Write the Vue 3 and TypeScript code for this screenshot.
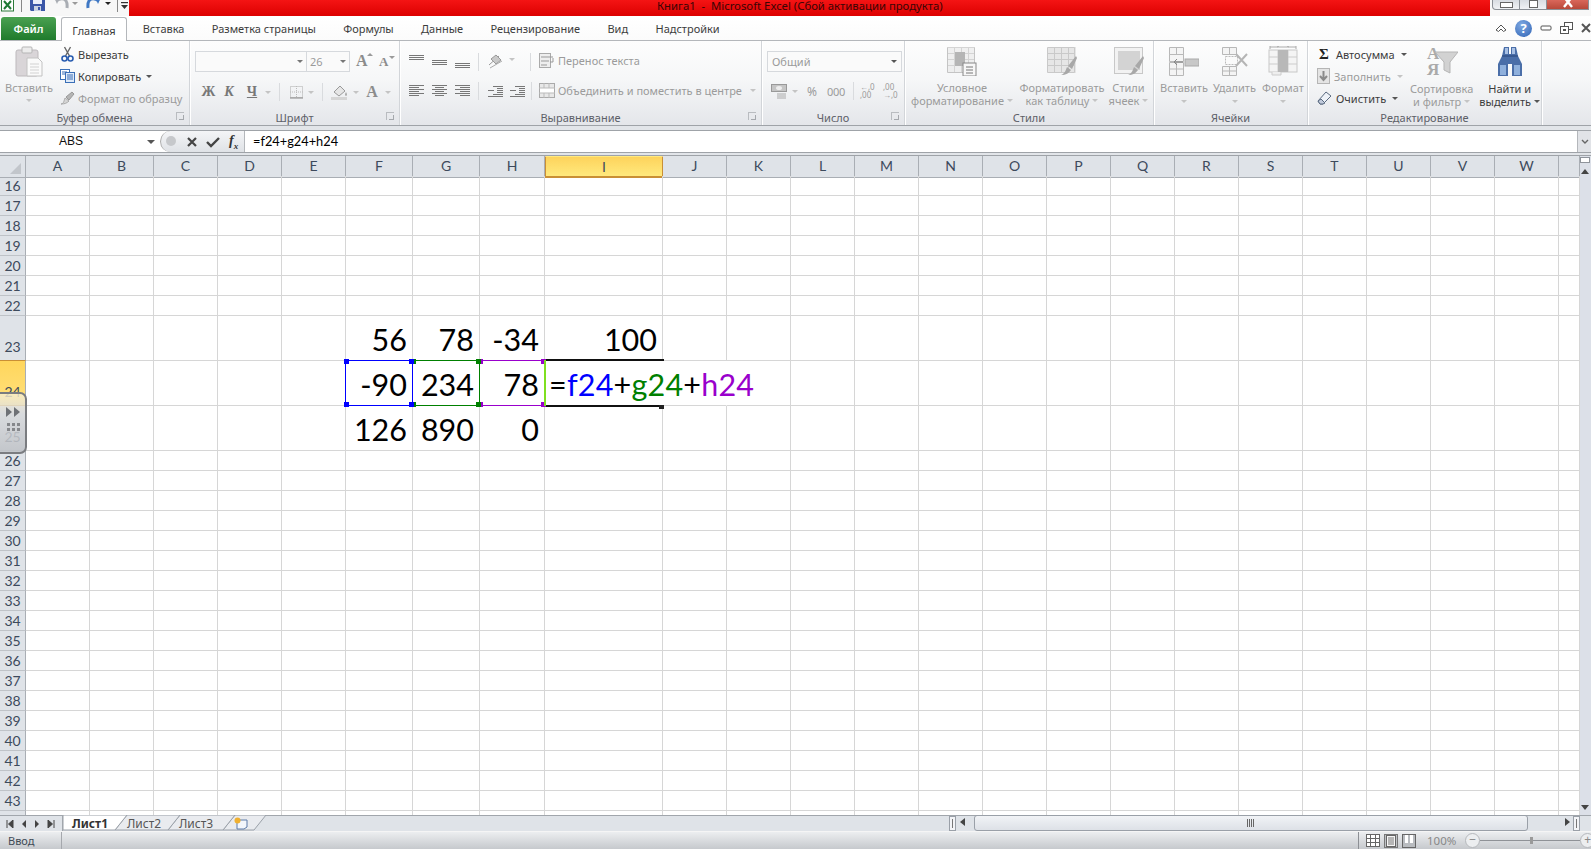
<template>
  <div class="app">
    <header class="titlebar">
      <div class="qat">
        <svg class="q-xl" width="13" height="12" viewBox="0 0 13 12"><rect x="0.5" y="-3" width="12" height="14" fill="#fff" stroke="#2c7a3a" /><path d="M3 1 L10 9 M10 1 L3 9" stroke="#1f7a35" stroke-width="2" /></svg>
        <span class="q-sep"></span>
        <svg class="q-save" width="15" height="12" viewBox="0 0 15 12"><path d="M0 -3H15V11H1L0 10Z" fill="#3b57a8" /><rect x="3" y="-3" width="9" height="7" fill="#e9eefa" /><rect x="4" y="6" width="7" height="5" fill="#c9d2e2" /><rect x="8" y="7" width="2" height="3" fill="#3b57a8" /></svg>
        <svg class="q-undo" width="16" height="12" viewBox="0 0 16 12"><path d="M2 1 C8 -3 14 -2 13 8" fill="none" stroke="#a9adb3" stroke-width="3" /><path d="M0 -3 L6 -3 L3 4Z" fill="#a9adb3" /></svg>
        <i class="caret c-q1"></i>
        <svg class="q-redo" width="16" height="12" viewBox="0 0 16 12"><path d="M14 1 C8 -3 2 -2 3 8" fill="none" stroke="#3f78c4" stroke-width="3" /><path d="M16 -3 L10 -3 L13 4Z" fill="#3f78c4" /></svg>
        <i class="caret c-q2"></i>
        <span class="q-sep s2"></span>
        <svg class="q-more" width="9" height="8" viewBox="0 0 9 8"><path d="M1 0.5H8" stroke="#333" stroke-width="1.4" /><path d="M1 3L8 3L4.5 7Z" fill="#333" /></svg>
      </div>
      <div class="redbar"><span class="doc">{{ docTitle }}</span></div>
      <div class="winbtns">
        <div class="wb min"><i></i></div>
        <div class="wb rest"><i></i></div>
        <div class="wb close"><svg width="14" height="8" viewBox="0 0 14 8"><path d="M3 -3 L7 2 L11 -3 M7 2 L3 7 M7 2 L11 7" fill="none" stroke="#fff" stroke-width="2.4" /></svg></div>
      </div>
    </header>

    <nav class="tabstrip">
      <div class="file">Файл</div>
      <div class="home">Главная</div>
      <div v-for="t in ribbonTabs" :key="t" class="rtab">{{ t }}</div>
      <div class="wincontrols">
        <svg width="12" height="10" viewBox="0 0 12 10"><path d="M1 7 L6 2 L11 7 L8.5 8.5 L6 6 L3.5 8.5Z" fill="#fff" stroke="#555" /></svg>
        <span class="help">?</span>
        <svg width="12" height="8" viewBox="0 0 12 8"><rect x="1" y="2" width="10" height="4" rx="1" fill="#fff" stroke="#555" /></svg>
        <svg width="13" height="12" viewBox="0 0 13 12"><rect x="4.5" y="0.5" width="8" height="7" fill="#fff" stroke="#555" /><rect x="0.5" y="4.5" width="8" height="7" fill="#fff" stroke="#555" /><rect x="3" y="7" width="3" height="2" fill="#555" /></svg>
        <svg width="10" height="10" viewBox="0 0 10 10"><path d="M1 1 L9 9 M9 1 L1 9" stroke="#555" stroke-width="2" /></svg>
      </div>
    </nav>

    <section class="ribbon">
      <div class="group g-clip">
        <div class="body">
          <div class="bigbtn paste">
            <svg width="28" height="31" viewBox="0 0 28 31">
              <rect x="1" y="4" width="22" height="26" rx="2" fill="#d9d5d8" stroke="#bdb9bc" />
              <rect x="7" y="1" width="10" height="6" rx="1" fill="#ececec" stroke="#b5b5b5" />
              <path d="M12 12H23L27 16V30H12Z" fill="#fafafa" stroke="#c2c2c2" />
              <path d="M15 18H24M15 21H24M15 24H24M15 27H24" stroke="#d2d2d2" />
            </svg>
            <span class="lab dim">Вставить</span>
            <i class="caret soft"></i>
          </div>
          <div class="smallcol">
            <div class="srow">
              <svg class="sic" width="14" height="16" viewBox="0 0 14 16"><path d="M4 1 L9 10 M10 1 L5 10" stroke="#666" stroke-width="1.4" /><circle cx="4" cy="12.5" r="2.5" fill="none" stroke="#2a5db0" stroke-width="1.6" /><circle cx="10" cy="12.5" r="2.5" fill="none" stroke="#2a5db0" stroke-width="1.6" /></svg>
              <span class="lab">Вырезать</span>
            </div>
            <div class="srow">
              <svg class="sic" width="15" height="14" viewBox="0 0 15 14"><rect x="0.5" y="0.5" width="9" height="10" fill="#fff" stroke="#3a6fb7" /><rect x="5.5" y="3.5" width="9" height="10" fill="#dfeaf8" stroke="#3a6fb7" /><path d="M2 3H7M2 5H5M7 6H13M7 8H13M7 10H13" stroke="#3a6fb7" /></svg>
              <span class="lab">Копировать</span><i class="caret dark"></i>
            </div>
            <div class="srow">
              <svg class="sic" width="15" height="14" viewBox="0 0 15 14"><path d="M1 13 C4 13 4 9 5 7 L9 10 C7 12 5 13 1 13Z" fill="#d5d5d5" stroke="#aaa" /><path d="M6 6 L12 1 L14 3 L9 9Z" fill="#b5b5b5" stroke="#999" /></svg>
              <span class="lab dim">Формат по образцу</span>
            </div>
          </div>
        </div>
        <div class="gname">Буфер обмена<i class="launch"></i></div>
      </div>

      <div class="group g-font">
        <div class="body col">
          <div class="combos">
            <div class="combo fontname"><i class="caret mid"></i></div>
            <div class="combo fontsize"><span class="dim">26</span><i class="caret mid"></i></div>
            <span class="growfont a1">A<i class="caret up"></i></span>
            <span class="growfont a2">A<i class="caret"></i></span>
          </div>
          <div class="toolrow fontrow">
            <b class="bi w19">Ж</b>
            <b class="bi w22 it">К</b>
            <b class="bi w24 un">Ч</b>
            <i class="caret soft w9"></i>
            <span class="vsep m1"></span>
            <svg class="m2" width="15" height="14" viewBox="0 0 15 14"><rect x="1.5" y="1.5" width="12" height="11" fill="none" stroke="#aaa" stroke-dasharray="1 1" /><path d="M7.5 1V13M1 7H14" stroke="#bbb" stroke-dasharray="1 1" /><path d="M1 13H14" stroke="#888" /></svg>
            <i class="caret soft m3"></i>
            <span class="vsep m4"></span>
            <svg class="m5" width="18" height="16" viewBox="0 0 18 16"><path d="M3 8 L9 2 L14 7 L8 12Z" fill="#e6e6e6" stroke="#999" /><path d="M15 8 q2 3 0 4 q-2 -1 0 -4Z" fill="#aaa" /><rect x="0" y="13" width="16" height="3" fill="#d5d5d5" /></svg>
            <i class="caret soft m6"></i>
            <b class="bi fontA">A</b>
            <i class="caret soft m7"></i>
          </div>
        </div>
        <div class="gname">Шрифт<i class="launch"></i></div>
      </div>

      <div class="group g-align">
        <div class="body col">
          <div class="toolrow alrow1">
            <svg v-for="(a, i) in alignTop" :key="i" class="alicon" width="15" height="16" viewBox="0 0 15 16"><path :d="a" stroke="#777" fill="none" /></svg>
            <span class="vsep a-sep1"></span>
            <svg class="orient" width="20" height="16" viewBox="0 0 20 16"><path d="M1 12 L11 3" stroke="#999" /><path d="M3 6 L8 2 L13 7 L8 11Z" fill="#c9c9c9" stroke="#999" /><path d="M2 15 L14 8" stroke="#aaa" /></svg>
            <i class="caret soft a-c"></i>
            <span class="vsep a-sep2"></span>
            <svg class="wrap" width="16" height="15" viewBox="0 0 16 15"><rect x="0.5" y="0.5" width="11" height="14" fill="#eee" stroke="#aaa" /><path d="M2 4H14 M2 8H10 M2 12H8" stroke="#999" /><path d="M14 5V9H11" fill="none" stroke="#999" /></svg>
            <span class="lab dim wraplab">Перенос текста</span>
          </div>
          <div class="toolrow alrow2">
            <svg v-for="(a, i) in alignBottom" :key="i" class="alicon" width="15" height="14" viewBox="0 0 15 14"><path :d="a" stroke="#777" fill="none" /></svg>
            <span class="vsep a-sep1"></span>
            <svg v-for="(a, i) in indents" :key="'n' + i" class="indent" width="15" height="12" viewBox="0 0 15 12"><path :d="a" stroke="#777" fill="none" /></svg>
            <span class="vsep a-sep3"></span>
            <svg class="merge" width="16" height="15" viewBox="0 0 16 15"><rect x="0.5" y="0.5" width="15" height="14" fill="#e8e8e8" stroke="#aaa" /><rect x="1" y="5" width="14" height="5" fill="#fff" /><path d="M0 5H16M0 10H16M5 0V5M10 0V5M5 10V15M10 10V15" stroke="#bbb" /></svg>
            <span class="lab dim wraplab">Объединить и поместить в центре</span>
            <i class="caret soft a-c2"></i>
          </div>
        </div>
        <div class="gname">Выравнивание<i class="launch"></i></div>
      </div>

      <div class="group g-num">
        <div class="body col">
          <div class="combos numcombo"><div class="combo general"><span class="dim">Общий</span><i class="caret dark"></i></div></div>
          <div class="toolrow numrow">
            <svg width="16" height="15" viewBox="0 0 16 15"><rect x="0.5" y="0.5" width="15" height="7" fill="#c5c5c5" stroke="#999" /><ellipse cx="8" cy="4" rx="3" ry="2" fill="#eee" /><path d="M6 10H15M6 12H15M6 14H15" stroke="#aaa" /></svg>
            <i class="caret soft n1"></i>
            <span class="dim n2">%</span>
            <span class="dim n3">000</span>
            <span class="vsep n4"></span>
            <span class="dec n5"><em>←,0</em><em>,00</em></span>
            <span class="dec n6"><em>,00</em><em>→,0</em></span>
          </div>
        </div>
        <div class="gname">Число<i class="launch"></i></div>
      </div>

      <div class="group g-styles">
        <div class="body bigs">
          <div class="bigbtn st1">
            <svg width="30" height="30" viewBox="0 0 30 30">
              <path v-for="(d, i) in tableLines" :key="i" :d="d" stroke="#c4c4c4" fill="none" />
              <rect x="1" y="1" width="26" height="25" fill="#e3e3e3" opacity=".5" />
              <rect x="8" y="6" width="10" height="14" fill="#b5b5b5" />
              <rect x="16" y="17" width="13" height="13" fill="#f7f7f7" stroke="#888" />
              <path d="M19 21H26M19 24H26M19 27H26" stroke="#777" />
            </svg>
            <span class="lab dim tight">Условное</span>
            <span class="lab dim tight">форматирование<i class="caret soft"></i></span>
          </div>
          <div class="bigbtn st2">
            <svg width="30" height="30" viewBox="0 0 30 30">
              <rect x="1" y="1" width="28" height="26" fill="#e6e6e6" />
              <path v-for="(d, i) in tableLines" :key="i" :d="d" stroke="#c9c9c9" fill="none" />
              <path d="M14 29 C18 28 19 23 20 21 L24 24 C22 27 19 29 14 29Z M21 20 L29 10 L30 12 L25 23Z" fill="#a8a8a8" />
            </svg>
            <span class="lab dim tight">Форматировать</span>
            <span class="lab dim tight">как таблицу<i class="caret soft"></i></span>
          </div>
          <div class="bigbtn st3">
            <svg width="30" height="30" viewBox="0 0 30 30">
              <rect x="0.5" y="1.5" width="28" height="26" fill="#f2f2f2" stroke="#c8c8c8" />
              <rect x="4" y="5" width="22" height="19" fill="#d3d3d3" />
              <path d="M14 29 C18 28 19 23 20 21 L24 24 C22 27 19 29 14 29Z M21 20 L29 10 L30 12 L25 23Z" fill="#a8a8a8" />
            </svg>
            <span class="lab dim tight">Стили</span>
            <span class="lab dim tight">ячеек<i class="caret soft"></i></span>
          </div>
        </div>
        <div class="gname">Стили</div>
      </div>

      <div class="group g-cells">
        <div class="body bigs">
          <div class="bigbtn ce1">
            <svg width="30" height="30" viewBox="0 0 30 30">
              <path d="M0.5 1.5H14.5V8.5H0.5ZM0.5 8.5H14.5V15.5H0.5Z M0.5 16.5H14.5V29.5H0.5Z M7.5 1.5V8.5M7.5 16.5V29.5M0.5 23H14.5" fill="#f4f4f4" stroke="#b8b8b8" />
              <rect x="16" y="13" width="14" height="7" fill="#c8c8c8" stroke="#aaa" />
              <path d="M14 16H5M8 13L5 16L8 19" fill="none" stroke="#888" />
            </svg>
            <span class="lab dim tight">Вставить</span><i class="caret soft cc"></i>
          </div>
          <div class="bigbtn ce2">
            <svg width="26" height="30" viewBox="0 0 26 30">
              <path d="M0.5 1.5H14.5V8.5H0.5Z M0.5 20.5H14.5V29.5H0.5Z M7.5 1.5V8.5M7.5 20.5V29.5M0.5 25H14.5" fill="#f4f4f4" stroke="#b8b8b8" />
              <rect x="3.5" y="10.5" width="12" height="8" fill="#fafafa" stroke="#bbb" stroke-dasharray="2 1" />
              <path d="M14 8 L25 20 M25 8 L14 20" stroke="#b5b5b5" stroke-width="2" />
            </svg>
            <span class="lab dim tight">Удалить</span><i class="caret soft cc"></i>
          </div>
          <div class="bigbtn ce3">
            <svg width="32" height="30" viewBox="0 0 32 30">
              <path d="M3 1H29 M3 0V3M29 0V3M10 1 l2 -1 M22 1 l-2 -1" stroke="#aaa" fill="none" />
              <rect x="2" y="4" width="28" height="22" fill="#f4f4f4" stroke="#c8c8c8" />
              <path d="M2 11H30M2 18H30M11 4V26M21 4V26" stroke="#ccc" />
              <rect x="11" y="4" width="10" height="22" fill="#b8b8b8" />
              <path d="M5 26V29H14V26" fill="#eee" stroke="#ccc" />
            </svg>
            <span class="lab dim tight">Формат</span><i class="caret soft cc"></i>
          </div>
        </div>
        <div class="gname">Ячейки</div>
      </div>

      <div class="group g-edit">
        <div class="body">
          <div class="smallcol ed">
            <div class="srow"><b class="sigma">Σ</b><span class="lab">Автосумма</span><i class="caret dark"></i></div>
            <div class="srow">
              <svg class="sic2" width="13" height="16" viewBox="0 0 13 16"><rect x="0.5" y="0.5" width="12" height="15" fill="#e4e4e4" stroke="#b5b5b5" /><path d="M6.5 3V11M3 8L6.5 12L10 8" fill="none" stroke="#8a8a8a" stroke-width="2" /></svg>
              <span class="lab dim">Заполнить</span><i class="caret soft"></i>
            </div>
            <div class="srow">
              <svg class="sic2" width="15" height="14" viewBox="0 0 15 14"><path d="M1 10 L9 1 L14 5 L6 13 H3Z" fill="#eef2f8" stroke="#5a6a80" /><path d="M1 10 L4 8 L8 12 L6 13 H3Z" fill="#c2cbdc" stroke="#5a6a80" /></svg>
              <span class="lab">Очистить</span><i class="caret dark"></i>
            </div>
          </div>
          <div class="bigbtn sort">
            <svg width="32" height="31" viewBox="0 0 32 31">
              <text x="1" y="13" class="az">A</text>
              <text x="1" y="29" class="az">Я</text>
              <path d="M9 6H32L24 16V27L18 24V16Z" fill="#d2d2d2" stroke="#b5b5b5" />
            </svg>
            <span class="lab dim tight">Сортировка</span>
            <span class="lab dim tight">и фильтр<i class="caret soft"></i></span>
          </div>
          <div class="bigbtn find">
            <svg width="28" height="31" viewBox="0 0 28 31">
              <path d="M8 1H13V8H15V1H20L22 10L26 18V30H16V18H12V30H2V18L6 10Z" fill="#4a6ea8" />
              <rect x="4" y="19" width="6" height="10" fill="#8fb0dc" />
              <rect x="18" y="19" width="6" height="10" fill="#8fb0dc" />
              <rect x="9" y="2" width="3" height="6" fill="#a8c0e4" />
              <rect x="16" y="2" width="3" height="6" fill="#a8c0e4" />
              <path d="M6 10H22" stroke="#29457a" />
            </svg>
            <span class="lab tight">Найти и</span>
            <span class="lab tight">выделить<i class="caret dark"></i></span>
          </div>
        </div>
        <div class="gname">Редактирование</div>
      </div>
      <div class="ribbon-rest"></div>
    </section>

    <section class="formula">
      <div class="fbar">
        <div class="namebox">ABS<i class="caret dark nb"></i></div>
        <div class="fxbtns">
          <span class="knob"></span>
          <svg width="12" height="12" viewBox="0 0 12 12"><path d="M2 2 L10 10 M10 2 L2 10" stroke="#444" stroke-width="2.2" /></svg>
          <svg width="14" height="12" viewBox="0 0 14 12"><path d="M1 6 L5 10 L13 2" fill="none" stroke="#444" stroke-width="2.4" /></svg>
          <span class="fx">f<sub>x</sub></span>
        </div>
        <div class="finput">=f24+g24+h24</div>
        <div class="fexpand"><svg width="8" height="6" viewBox="0 0 8 6"><path d="M1 1 L4 4 L7 1" fill="none" stroke="#666" stroke-width="1.4" /></svg></div>
      </div>
    </section>

    <section class="sheet">
      <div class="grid">
        <div class="row headrow">
          <div class="corner"><i></i></div>
          <div v-for="c in cols" :key="c" class="colhead" :class="{ on: c === 'I' }">{{ c }}</div>
          <div class="colhead"></div>
        </div>
        <div v-for="r in rows" :key="r" class="row" :class="{ tall: r >= 23 && r <= 25 }">
          <div class="rowhead" :class="{ on: r === 24 }"><span v-if="r < 44">{{ r }}</span></div>
          <div v-for="c in allCols" :key="c" class="cell" :class="cellClass(c, r)">
            <span v-if="valueAt(c, r)" class="val">{{ valueAt(c, r) }}</span>
            <span v-if="c === 'I' && r === 24" class="editing">=<span class="blue">f24</span>+<span class="green">g24</span>+<span class="purple">h24</span></span>
            <span v-if="refOf(c, r)" class="ref" :class="refOf(c, r)">
              <i class="h tl"></i><i class="h tr"></i><i class="h bl"></i><i class="h br"></i>
            </span>
            <span v-if="c === 'I' && r === 24" class="fill"></span>
          </div>
        </div>
      </div>
      <aside class="vscroll">
        <span class="vsplit"></span>
        <i class="arr up"></i>
        <i class="arr down"></i>
      </aside>
    </section>

    <section class="tabsbar">
      <div class="nav">
        <svg width="8" height="8" viewBox="0 0 8 8"><path d="M1 0V8M7 0V8L2.5 4Z" stroke="#444" fill="#444" /></svg>
        <svg width="6" height="8" viewBox="0 0 6 8"><path d="M5 0V8L1 4Z" fill="#444" /></svg>
        <svg width="6" height="8" viewBox="0 0 6 8"><path d="M1 0V8L5 4Z" fill="#444" /></svg>
        <svg width="8" height="8" viewBox="0 0 8 8"><path d="M7 0V8M1 0V8L5.5 4Z" stroke="#444" fill="#444" /></svg>
      </div>
      <div class="sheets">
        <svg class="shapes" width="210" height="16" viewBox="0 0 210 16">
          <path d="M160 15 L172 0 H203 L191 15Z" fill="#e9ebef" stroke="#9aa0a8" />
          <path d="M105 15 L117 0 H172 L160 15Z" fill="#e9ebef" stroke="#9aa0a8" />
          <path d="M52 15 L64 0 H117 L105 15Z" fill="#e9ebef" stroke="#9aa0a8" />
          <path d="M0 0 H64 L52 15 H0Z" fill="#fff" stroke="#9aa0a8" />
        </svg>
        <span class="sheet-name active">Лист1</span>
        <span class="sheet-name second">Лист2</span>
        <span class="sheet-name">Лист3</span>
        <svg class="newsheet" width="14" height="13" viewBox="0 0 14 13"><path d="M3 3H13V10L10 12H3Z" fill="#f3f6fb" stroke="#5c7ba8" /><circle cx="3.5" cy="3.5" r="3" fill="#f0b030" /></svg>
      </div>
      <div class="hspacer"></div>
      <span class="split"><i></i></span>
      <span class="harrow"><i class="arr left"></i></span>
      <div class="thumb"><span class="grip"></span></div>
      <span class="harrow wide"><i class="arr right"></i></span>
      <span class="split"><i></i></span>
      <span class="hcorner"></span>
    </section>

    <footer class="status">
      <span class="mode">Ввод</span>
      <div class="views">
        <svg width="14" height="13" viewBox="0 0 14 13"><rect x="0.5" y="0.5" width="13" height="12" fill="#fff" stroke="#666" /><path d="M0 4.5H14M0 8.5H14M4.5 0V13M9.5 0V13" stroke="#666" /></svg>
        <span class="viewbtn"><svg width="10" height="12" viewBox="0 0 10 12"><rect x="0.5" y="0.5" width="9" height="11" fill="#f5f5f5" stroke="#666" /><path d="M2 3H8M2 5H8M2 7H8M2 9H8" stroke="#777" /></svg></span>
        <svg width="14" height="14" viewBox="0 0 14 14"><rect x="0.5" y="0.5" width="13" height="13" fill="#b9bcc0" stroke="#666" /><rect x="3" y="1" width="3" height="8" fill="#fff" /><rect x="8" y="1" width="3" height="8" fill="#fff" /></svg>
      </div>
      <span class="pct">100%</span>
      <span class="zbtn">−</span>
      <span class="slider"><i></i></span>
      <span class="zbtn plus">+</span>
    </footer>

    <div class="floatbar">
      <div class="ff"><i></i><i></i></div>
      <div class="dots"><i v-for="n in 6" :key="n"></i></div>
    </div>
  </div>
</template>

<script setup lang="ts">
const docTitle = 'Книга1\u00a0\u00a0-\u00a0\u00a0Microsoft Excel (Сбой активации продукта)';
const ribbonTabs = ['Вставка', 'Разметка страницы', 'Формулы', 'Данные', 'Рецензирование', 'Вид', 'Надстройки'];

const cols = 'ABCDEFGHIJKLMNOPQRSTUVW'.split('');
const allCols = [...cols, 'X'];
const rows: number[] = [];
for (let r = 16; r <= 44; r++) rows.push(r);

const values: Record<string, string> = {
  F23: '56', G23: '78', H23: '-34', I23: '100',
  F24: '-90', G24: '234', H24: '78',
  F25: '126', G25: '890', H25: '0',
};

function valueAt(col: string, row: number): string {
  return values[col + row] || '';
}

function refOf(col: string, row: number): string {
  if (row !== 24) return '';
  if (col === 'F') return 'r-blue';
  if (col === 'G') return 'r-green';
  if (col === 'H') return 'r-purple';
  return '';
}

function cellClass(col: string, row: number) {
  return {
    active: col === 'I' && row === 24,
    open: (col === 'J' && row === 24),
    num: !!valueAt(col, row),
  };
}

// horizontal text lines for the alignment buttons
function lines(spec: number[][]): string {
  return spec.map(([x1, x2, y]) => `M${x1} ${y}.5H${x2}`).join('');
}
const full = (ys: number[]) => ys.map((y) => [0, 15, y]);
const alignTop = [
  lines(full([2, 4, 6])),
  lines(full([7, 9, 11])),
  lines(full([10, 12, 14])),
];
const alignBottom = [
  lines([[0, 15, 1], [0, 10, 3], [0, 15, 5], [0, 10, 7], [0, 15, 9], [0, 10, 11]]),
  lines([[0, 15, 1], [3, 12, 3], [0, 15, 5], [3, 12, 7], [0, 15, 9], [3, 12, 11]]),
  lines([[0, 15, 1], [5, 15, 3], [0, 15, 5], [5, 15, 7], [0, 15, 9], [5, 15, 11]]),
];
const indents = [
  lines([[5, 15, 1], [9, 15, 3], [0, 6, 5], [9, 15, 5], [9, 15, 7], [5, 15, 9], [0, 15, 11]]),
  lines([[5, 15, 1], [9, 15, 3], [0, 6, 5], [9, 15, 5], [9, 15, 7], [5, 15, 9], [0, 15, 11]]),
];
const tableLines = ['M0.5 1.5H27.5V26.5H0.5ZM0.5 7.5H27.5M0.5 13.5H27.5M0.5 19.5H27.5M7.5 1V27M14.5 1V27M21.5 1V27'];
</script>

<style>
html, body { margin: 0; padding: 0; background: #fff; overflow: hidden; }
</style>

<style scoped>
.app {
  width: 1591px;
  height: 849px;
  display: flex;
  flex-direction: column;
  position: relative;
  overflow: hidden;
  font-family: "Noto Sans", sans-serif;
  font-size: 11px;
  color: #3c3c3c;
  background: #fff;
}
svg { flex: none; display: block; overflow: hidden; }
i { display: block; font-style: normal; }

/* title bar */
.titlebar { height: 16px; display: flex; background: #f7f7f7; flex: none; }
.qat { width: 129px; display: flex; align-items: flex-start; flex: none; overflow: hidden; }
.q-xl { margin-left: 1px; }
.q-sep { width: 1px; height: 12px; background: #888; margin-left: 7px; }
.q-save { margin-left: 8px; }
.q-undo { margin-left: 9px; }
.c-q1 { margin: 2px 0 0 2px; }
.q-redo { margin-left: 7px; }
.c-q2 { margin: 2px 0 0 4px; border-top-color: #222 !important; }
.s2 { margin-left: 6px; }
.q-more { margin: 2px 0 0 2px; }
.redbar {
  flex: 1;
  background: linear-gradient(#f41414, #dc0000);
  padding-left: 528px;
  overflow: hidden;
}
.doc { font-size: 11.3px; line-height: 11px; display: block; color: #3a0505; white-space: nowrap; }
.winbtns { width: 99px; display: flex; height: 11px; flex: none; padding-left: 2px; }
.wb { height: 10px; border: 1px solid #8a8f96; border-top: 0; box-sizing: border-box; display: flex; justify-content: center; overflow: hidden; background: linear-gradient(#d8dce2, #f0f2f5); }
.min { width: 28px; border-bottom-left-radius: 4px; }
.min i { width: 11px; height: 4px; margin-top: 2px; background: #fff; border: 1px solid #666; }
.rest { width: 27px; border-left: 0; }
.rest i { width: 7px; height: 6px; margin-top: 0; background: #fff; border: 1px solid #666; }
.close { width: 42px; border-left: 0; background: linear-gradient(#d9675a, #b9493a); }

/* ribbon tabs */
.tabstrip {
  height: 25px;
  flex: none;
  display: flex;
  align-items: flex-end;
  background: linear-gradient(#fff, #fbfbfb);
  border-bottom: 1px solid #b4b7bb;
  box-sizing: border-box;
  position: relative;
}
.file {
  width: 55px;
  height: 23px;
  margin-left: 1px;
  line-height: 23px;
  text-align: center;
  color: #fff;
  font-weight: 600;
  border-radius: 3px 3px 0 0;
  background: linear-gradient(#4aa151, #1f7b2c);
}
.home {
  width: 66px;
  height: 24px;
  margin-left: 5px;
  margin-bottom: -1px;
  line-height: 25px;
  text-align: center;
  background: #fff;
  border: 1px solid #b4b7bb;
  border-bottom: 0;
  border-radius: 3px 3px 0 0;
  box-sizing: border-box;
}
.rtab { padding: 0 13.7px; line-height: 25px; height: 24px; white-space: nowrap; }
.home + .rtab { margin-left: 2px; }
.wincontrols { margin-left: auto; display: flex; align-items: center; height: 24px; gap: 8px; width: 96px; flex: none; }
.help {
  width: 17px; height: 17px; border-radius: 50%; flex: none;
  background: radial-gradient(circle at 40% 30%, #7fa9e2, #2f63b5);
  color: #fff; font-weight: 700; font-size: 13px; line-height: 17px; text-align: center;
}

/* ribbon body */
.ribbon {
  height: 85px;
  flex: none;
  display: flex;
  box-sizing: border-box;
  background: linear-gradient(#fdfdfd, #f6f7f8 45%, #e4e6ea);
  border-bottom: 1px solid #9fa3a8;
}
.group {
  flex: none;
  display: flex;
  flex-direction: column;
  box-sizing: border-box;
  border-right: 1px solid #d2d5d9;
  box-shadow: 1px 0 0 #fff;
  position: relative;
}
.g-clip { width: 190px; }
.g-font { width: 210px; }
.g-align { width: 362px; }
.g-num { width: 143px; }
.g-styles { width: 249px; }
.g-cells { width: 154px; }
.g-edit { width: 234px; }
.ribbon-rest { flex: 1; }
.body { flex: 1; display: flex; min-height: 0; }
.body.col { flex-direction: column; }
.gname { height: 16px; line-height: 18px; text-align: center; color: #5d6068; flex: none; position: relative; }
.launch {
  position: absolute; right: 5px; top: 3px; width: 8px; height: 8px;
  border: 1px solid #b9bcc0; border-width: 1px 0 0 1px; box-sizing: border-box;
}
.launch::after { content: ""; position: absolute; right: 0; bottom: 0; width: 4px; height: 4px; border: 1px solid #a5a8ad; border-width: 0 1px 1px 0; }
.lab { white-space: nowrap; color: #3c3c3c; }
.dim, .lab.dim { color: #9b9b9b; }
.caret {
  display: inline-block;
  width: 0; height: 0;
  border: 3px solid transparent;
  border-top: 3px solid #9a9a9a;
  border-bottom: 0;
  flex: none;
}
.caret.soft { border-top-color: #c4c4c4; }
.caret.dark { border-top-color: #555; }
.caret.mid { border-top-color: #777; }

.bigbtn { display: flex; flex-direction: column; align-items: center; flex: none; padding-top: 5px; box-sizing: border-box; }
.bigbtn svg { margin-bottom: 5px; }
.tight { line-height: 13px; display: flex; align-items: center; gap: 3px; }
.paste { width: 48px; margin-left: 5px; }
.paste svg { margin-bottom: 4px; }
.paste .lab { line-height: 14px; }
.paste .caret { margin-top: 4px; }
.smallcol { display: flex; flex-direction: column; margin-left: 7px; padding-top: 2px; }
.srow { height: 22px; display: flex; align-items: center; gap: 3px; }
.srow .sic { margin-left: 0; width: 15px; }
.srow .caret { margin-left: 2px; }

/* font group */
.combos { display: flex; padding: 10px 0 0 5px; height: 31px; box-sizing: border-box; align-items: flex-start; }
.combo {
  height: 21px; box-sizing: border-box;
  border: 1px solid #d6d9dd; background: #fafafa;
  display: flex; align-items: center; justify-content: space-between; padding: 0 3px;
}
.fontname { width: 112px; justify-content: flex-end; }
.fontsize { width: 43px; margin-left: 0; border-left: 0; }
.growfont {
  font-family: "Liberation Serif", serif; font-weight: 700; color: #8c8c8c; position: relative; display: block;
}
.a1 { font-size: 16px; margin-left: 6px; width: 23px; line-height: 20px; }
.a2 { font-size: 13px; width: 20px; line-height: 22px; }
.growfont .caret { position: absolute; left: 11px; top: 2px; }
.a2 .caret { left: 10px; top: 5px; }
.caret.up { border-top: 0; border-bottom: 3px solid #9a9a9a; }
.toolrow { display: flex; align-items: center; height: 22px; }
.fontrow { padding: 9px 0 0 9px; height: 31px; box-sizing: border-box; }
.bi { font-family: "Liberation Serif", serif; font-weight: 700; font-size: 14px; color: #777; text-align: center; display: block; }
.w19 { width: 19px; }
.w22 { width: 22px; }
.w24 { width: 24px; }
.w9 { margin-left: 1px; }
.it { font-style: italic; }
.un { text-decoration: underline; }
.vsep { width: 1px; height: 18px; background: #d9dbde; flex: none; display: block; }
.m1 { margin-left: 8px; }
.m2 { margin-left: 9px; }
.m3 { margin-left: 4px; }
.m4 { margin-left: 8px; }
.m5 { margin-left: 8px; }
.m6 { margin-left: 4px; }
.fontA { font-size: 16px; margin-left: 7px; width: 12px; color: #8c8c8c; }
.m7 { margin-left: 7px; }

/* alignment group */
.alrow1, .alrow2 { padding-left: 9px; }
.alrow1 { box-sizing: border-box; align-items: flex-start; margin-top: 6px; height: 26px; padding-top: 6px; }
.alrow2 { height: 27px; padding-top: 8px; box-sizing: border-box; }
.alicon { margin-right: 8px; }
.a-sep1 { margin-left: 0; }
.orient { margin-left: 9px; }
.a-c { margin: 5px 0 0 1px; }
.a-sep2 { margin-left: 15px; }
.wrap { margin-left: 8px; }
.wraplab { margin-left: 3px; }
.alrow1 .wraplab { line-height: 15px; }
.indent { margin-left: 9px; margin-right: -2px; }
.a-sep3 { margin-left: 8px; }
.merge { margin-left: 7px; }
.a-c2 { margin-left: 8px; }

/* number group */
.numcombo { padding-left: 5px; }
.general { width: 135px; padding: 0 4px; }
.numrow { padding: 8px 0 0 9px; height: 30px; box-sizing: border-box; }
.n1 { margin-left: 5px; }
.n2 { margin-left: 9px; font-size: 12px; }
.n3 { margin-left: 10px; font-size: 11px; letter-spacing: -.3px; }
.n4 { margin-left: 8px; }
.n5 { margin-left: 6px; }
.n6 { margin-left: 7px; }
.dec { display: flex; flex-direction: column; font-size: 8px; line-height: 8px; color: #9b9b9b; width: 16px; }
.dec em { font-style: normal; white-space: nowrap; }

/* big buttons */
.bigs { position: relative; }
.st1 { width: 110px; margin-left: 2px; padding-top: 5px; }
.st2 { width: 90px; }
.st3 { width: 43px; }
.ce1 { width: 52px; margin-left: 4px; }
.ce2 { width: 49px; }
.ce3 { width: 48px; }
.cc { margin-top: 6px; }
.ed { margin-left: 5px; width: 94px; }
.sigma { font-family: "Liberation Serif", serif; font-size: 15px; color: #222; width: 16px; margin-left: 3px; text-align: center; }
.sic2 { margin-left: 4px; }
.sort { width: 70px; }
.find { width: 66px; }
.ed .srow { gap: 4px; }
.az { font-family: "Liberation Serif", serif; font-size: 17px; font-weight: 700; fill: #aaa; }

/* formula bar */
.formula { height: 30px; flex: none; padding-top: 4px; box-sizing: border-box; background: #e2e5e9; border-bottom: 1px solid #9fa3a8; }
.fbar { height: 21px; display: flex; background: #fff; border-top: 1px solid #9fa3a8; border-bottom: 1px solid #9fa3a8; box-sizing: content-box; }
.namebox { width: 160px; flex: none; position: relative; font-family: "Liberation Sans", sans-serif; font-size: 12px; line-height: 21px; color: #111; padding-left: 59px; box-sizing: border-box; }
.nb { position: absolute; left: 147px; top: 9px; border-width: 4px; border-bottom: 0; }
.fxbtns {
  width: 85px; flex: none; display: flex; align-items: center; box-sizing: border-box;
  background: linear-gradient(#f4f5f7, #dfe2e6);
  border-left: 1px solid #aaa; border-right: 1px solid #b4b7bb; border-radius: 11px 0 0 11px;
  padding-left: 25px; gap: 8px; position: relative;
}
.knob { position: absolute; left: 5px; top: 5px; width: 10px; height: 10px; border-radius: 50%; background: #c6c8cb; }
.fx { font-family: "Liberation Serif", serif; font-style: italic; font-weight: 700; font-size: 14px; color: #333; margin-left: 1px; }
.fx sub { font-size: 9px; }
.finput { flex: 1; padding-left: 8px; font-family: Lato, sans-serif; font-size: 12.8px; line-height: 21px; color: #000; }
.fexpand { width: 13px; flex: none; display: flex; align-items: center; justify-content: center; background: #e1e3e7; border-left: 1px solid #b4b7bb; }

/* sheet */
.sheet { flex: 1; display: flex; min-height: 0; }
.grid { flex: 1; overflow: hidden; min-width: 0; }
.row {
  display: grid;
  grid-template-columns: 26px repeat(5, 64px) 67px 67px 65px 118px repeat(14, 64px) 1fr;
  height: 20px;
  box-sizing: border-box;
}
.row.tall { height: 45px; }
.corner, .colhead, .rowhead {
  background: #dfe3e8;
  box-sizing: border-box;
  border-right: 1px solid #a9aeb4;
  border-bottom: 1px solid #a9aeb4;
  color: #3d4a5c;
  font-family: Lato, sans-serif;
  font-size: 14px;
}
.corner { position: relative; }
.corner i { position: absolute; left: 10px; bottom: 3px; width: 0; height: 0; border-left: 11px solid transparent; border-bottom: 11px solid #c2c6cb; }
.colhead { text-align: center; line-height: 19px; }
.colhead.on {
  background: linear-gradient(#fdd35c, #ffe97d);
  border: 1px solid #c98f35;
  border-top-color: transparent;
  border-bottom-width: 2px;
}
.rowhead { display: flex; justify-content: center; align-items: flex-end; border-bottom-color: #bfc3c8; line-height: 18px; }
.tall .rowhead { padding-bottom: 4px; }
.rowhead.on { background: linear-gradient(#ffd65c, #ffe07c); border-top: 1px solid #c98f35; border-bottom: 1px solid #c98f35; margin-top: -1px; }
.cell {
  position: relative;
  box-sizing: border-box;
  border-right: 1px solid #d6d6d6;
  border-bottom: 1px solid #d6d6d6;
  font-family: Lato, sans-serif;
  font-size: 30.5px;
  color: #000;
  white-space: nowrap;
}
.cell.open { border-right-color: transparent; }
.val { position: absolute; right: 5px; bottom: 3px; line-height: 36px; }
.editing { position: absolute; left: 4px; bottom: 3px; line-height: 36px; z-index: 1; letter-spacing: .2px; }
.blue { color: #0000ff; }
.green { color: #008000; }
.purple { color: #9900cc; }
.ref { position: absolute; inset: -1px -1px -1px -1px; border: 1px solid; }
.r-blue { border-color: #0000ff; --h: #0000ff; z-index: 3; }
.r-green { border-color: #008000; --h: #008000; z-index: 2; }
.r-purple { border-color: #9900cc; --h: #9900cc; z-index: 1; }
.h { position: absolute; width: 5px; height: 5px; background: var(--h); }
.tl { left: -2px; top: -2px; }
.tr { right: -2px; top: -2px; }
.bl { left: -2px; bottom: -2px; }
.br { right: -2px; bottom: -2px; }
.cell.active { border-right-color: transparent; z-index: 4; }
.cell.active::before {
  content: ""; position: absolute; left: 1px; right: -2px; top: -2px; height: 2px; background: #111;
}
.cell.active::after {
  content: ""; position: absolute; left: -1px; top: -1px; bottom: -1px; width: 2px; background: #7fe020;
}
.fill { position: absolute; left: 1px; right: 3px; bottom: -2px; height: 2px; background: #111; }
.fill::after { content: ""; position: absolute; right: -5px; bottom: -2px; width: 5px; height: 4px; background: #222; }

.vscroll { width: 11px; flex: none; background: #dce0e8; position: relative; }
.vsplit { display: block; width: 10px; height: 6px; box-sizing: border-box; margin-top: 1px; background: #fff; border: 1px solid #8f949b; }
.arr { position: absolute; width: 0; height: 0; border: 4px solid transparent; }
.arr.up { top: 13px; left: 1px; border-top: 0; border-bottom: 5px solid #444; }
.arr.down { bottom: 5px; left: 1px; border-bottom: 0; border-top: 5px solid #444; }

/* sheet tabs */
.tabsbar { height: 16px; flex: none; display: flex; background: #dfe3e8; border-top: 1px solid #a1a6ac; box-sizing: border-box; position: relative; align-items: stretch; }
.nav { width: 63px; flex: none; box-sizing: border-box; border-right: 1px solid #a1a6ac; display: flex; align-items: center; gap: 7px; padding-left: 6px; }
.sheets { position: relative; width: 210px; flex: none; display: flex; }
.shapes { position: absolute; left: 0; top: -1px; }
.sheet-name { position: relative; width: 52px; font-size: 12px; line-height: 15px; text-align: center; color: #555; }
.sheet-name.second { margin-left: 2px; }
.sheet-name.active { font-weight: 700; color: #333; margin-left: 1px; }
.newsheet { position: relative; margin: 1px 0 0 12px; }
.hspacer { flex: 1; }
.split { width: 7px; flex: none; background: #f3f4f7; border: 1px solid #9aa0a8; box-sizing: border-box; display: flex; justify-content: center; align-items: center; }
.split i { width: 1px; height: 9px; background: #777; }
.harrow { width: 18px; flex: none; position: relative; }
.harrow.wide { width: 45px; }
.arr.left { left: 4px; top: 2px; border-left: 0; border-right: 5px solid #444; }
.arr.right { right: 3px; top: 2px; border-right: 0; border-left: 5px solid #444; }
.thumb { width: 554px; flex: none; display: flex; align-items: center; justify-content: center; box-sizing: border-box; margin-top: -1px; border: 1px solid #9aa0a8; border-radius: 3px; background: linear-gradient(#f1f3f6, #dde1e7); }
.grip { width: 8px; height: 8px; background: repeating-linear-gradient(90deg, #666 0 1px, transparent 1px 2px); }
.hcorner { width: 11px; flex: none; }

/* status bar */
.status {
  height: 18px; flex: none; display: flex; align-items: center;
  background: linear-gradient(#eceef0, #c6c9cd);
  border-top: 1px solid #f5f5f5;
  box-sizing: border-box;
  position: relative;
}
.mode { width: 62px; flex: none; padding-left: 8px; box-sizing: border-box; height: 18px; line-height: 17px; border-right: 1px solid #a5a8ad; color: #3f4a56; font-size: 11px; }
.views { display: flex; align-items: center; margin-left: 1296px; padding-left: 7px; border-left: 1px solid #8c8f94; gap: 4px; height: 18px; }
.viewbtn { width: 14px; height: 14px; border: 1px solid #777; background: #bfc2c6; display: flex; justify-content: center; align-items: center; box-sizing: border-box; }
.pct { margin-left: 11px; color: #888; font-size: 11.5px; width: 30px; }
.zbtn { width: 13px; height: 13px; border-radius: 50%; border: 1px solid #b5b8bc; background: #eceef0; font-size: 12px; line-height: 12px; text-align: center; color: #888; margin-left: 9px; flex: none; }
.slider { width: 100px; height: 1px; background: #8f9297; position: relative; flex: none; }
.slider i { position: absolute; left: 50px; top: -3px; width: 3px; height: 7px; background: #9a9a9a; }
.zbtn.plus { margin-left: 0; }

/* floating toolbar */
.floatbar {
  position: absolute; left: -2px; top: 392px; width: 29px; height: 62px; box-sizing: border-box;
  border: 2px solid #7a7c80; border-radius: 0 7px 7px 0;
  background: linear-gradient(rgba(248, 238, 205, .8), rgba(215, 217, 220, .85) 35%, rgba(190, 193, 198, .85));
  z-index: 5;
}
.ff { position: absolute; left: 6px; top: 13px; display: flex; gap: 2px; }
.ff i { width: 0; height: 0; border-left: 6px solid #6e7176; border-top: 5px solid transparent; border-bottom: 5px solid transparent; }
.dots { position: absolute; left: 7px; top: 29px; display: grid; grid-template-columns: repeat(3, 3px); gap: 2px; }
.dots i { width: 3px; height: 3px; background: #85878b; }
</style>
